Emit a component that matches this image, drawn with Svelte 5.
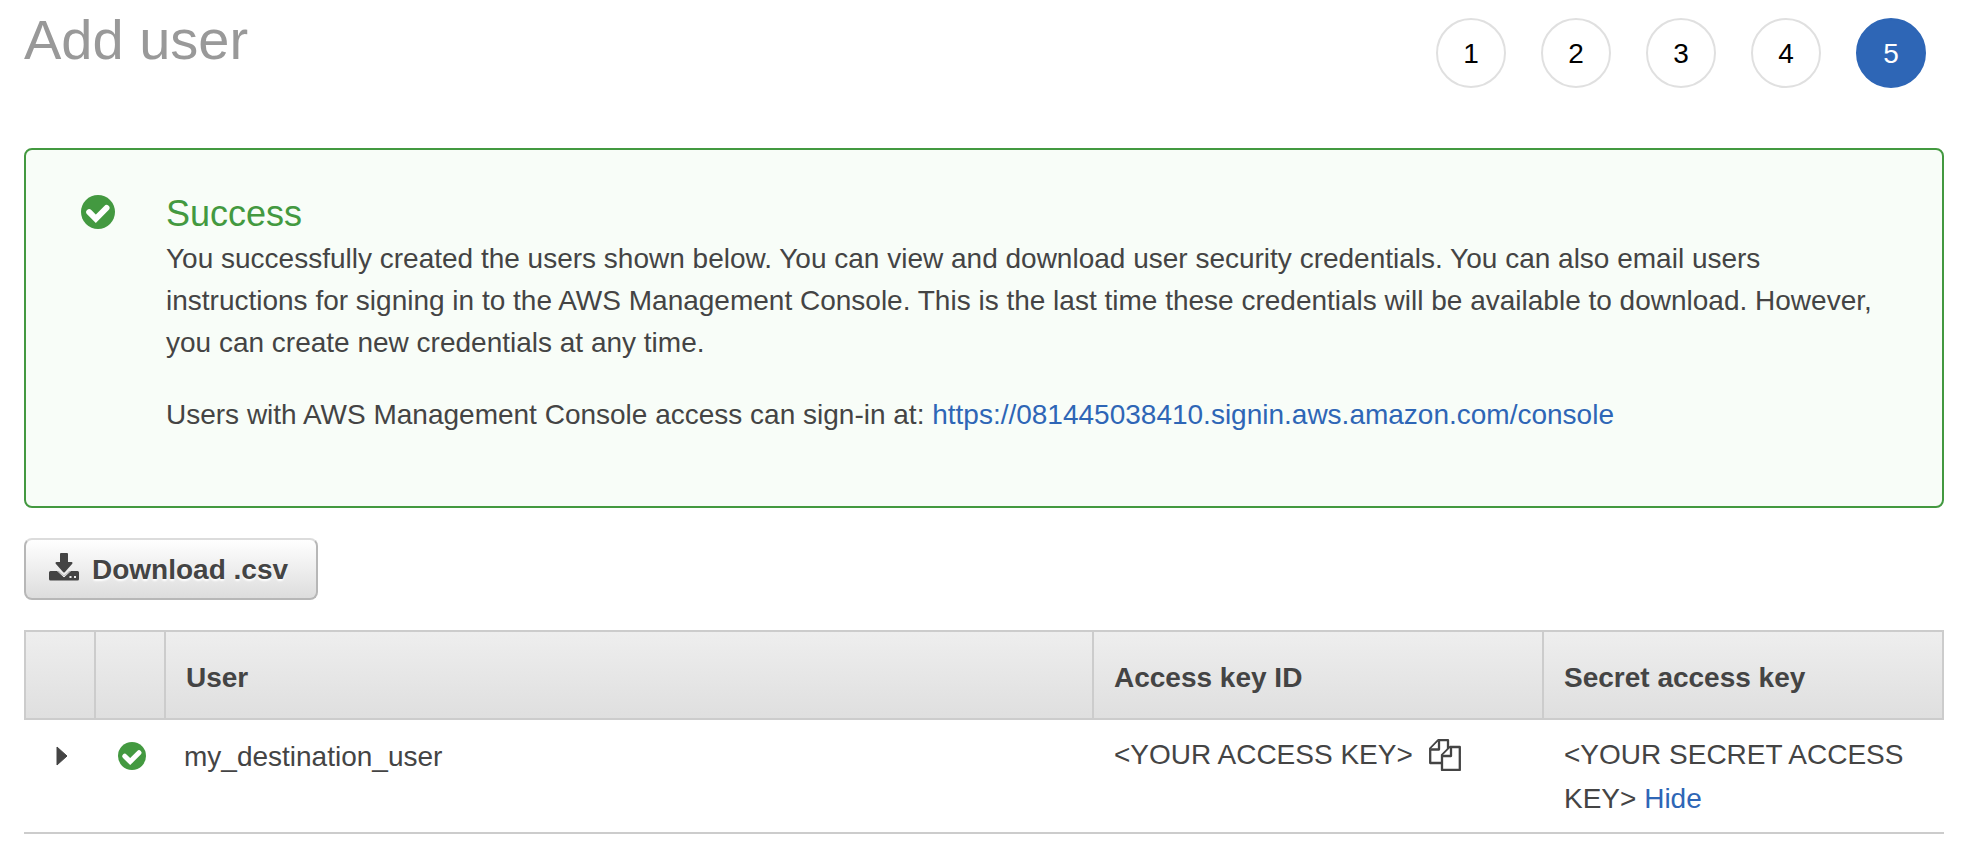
<script lang="ts">
  type NewUser = {
    name: string;
    accessKey: string;
    secretKey: string;
  };

  const steps = [1, 2, 3, 4, 5];
  const currentStep = 5;
  const signinUrl = 'https://081445038410.signin.aws.amazon.com/console';

  const users: NewUser[] = [
    {
      name: 'my_destination_user',
      accessKey: '<YOUR ACCESS KEY>',
      secretKey: '<YOUR SECRET ACCESS KEY>'
    }
  ];

  let secretVisible = $state(true);

  function copyKey(key: string) {
    navigator.clipboard?.writeText(key);
  }
</script>

{#snippet checkIcon()}
  <svg class="check" viewBox="0 0 34 34" aria-hidden="true">
    <circle cx="17" cy="17" r="17" fill="#439940" />
    <path d="M8.200 17.200l6.600 6.600l10.700-10.800" fill="none" stroke="#fff" stroke-width="6" stroke-linecap="round" />
  </svg>
{/snippet}

<main class="page">
  <header class="page-header">
    <h1>Add user</h1>
    <ol class="steps">
      {#each steps as step}
        <li class="step" class:active={step === currentStep}>{step}</li>
      {/each}
    </ol>
  </header>

  <section class="alert">
    <div class="alert-icon">{@render checkIcon()}</div>
    <div class="alert-body">
      <h2>Success</h2>
      <p>
        You successfully created the users shown below. You can view and download user security credentials. You can
        also email users instructions for signing in to the AWS Management Console. This is the last time these
        credentials will be available to download. However, you can create new credentials at any time.
      </p>
      <p>
        Users with AWS Management Console access can sign-in at:
        <a href={signinUrl}>{signinUrl}</a>
      </p>
    </div>
  </section>

  <button type="button" class="download">
    <svg viewBox="0 0 30 28" aria-hidden="true">
      <path
        d="M1.500 18h8l5.500 5.300l5.500-5.300h8q1.500 0 1.500 1.500v6.500q0 1.500-1.500 1.500h-27q-1.500 0-1.500-1.500v-6.500q0-1.500 1.500-1.500z"
        fill="#444"
      />
      <path d="M12 1h6v9h4.500l-7.500 8.500l-7.500-8.500h4.500z" fill="#444" stroke="#444" stroke-width="2" stroke-linejoin="round" />
      <path d="M8 17.500l7 6.500l7-6.500" fill="none" stroke="#eee" stroke-width="1" />
      <path d="M20.500 23h2v2h-2zM25 23h2v2h-2z" fill="#eee" />
    </svg>
    Download .csv
  </button>

  <table>
    <colgroup>
      <col class="col-icon" />
      <col class="col-icon" />
      <col />
      <col class="col-key" />
      <col class="col-secret" />
    </colgroup>
    <thead>
      <tr>
        <th aria-label="Details"></th>
        <th aria-label="Status"></th>
        <th>User</th>
        <th>Access key ID</th>
        <th>Secret access key</th>
      </tr>
    </thead>
    <tbody>
      {#each users as user}
        <tr>
          <td class="icon-cell">
            <button type="button" class="plain" aria-label="Expand">
              <svg class="caret" viewBox="0 0 12 20" aria-hidden="true">
                <path d="M1 1l10 9l-10 9z" fill="#444" stroke="#444" stroke-linejoin="round" />
              </svg>
            </button>
          </td>
          <td class="icon-cell">{@render checkIcon()}</td>
          <td class="name">{user.name}</td>
          <td>
            <div class="key">
              {user.accessKey}
              <button type="button" class="plain" aria-label="Copy" onclick={() => copyKey(user.accessKey)}>
                <svg class="copy" viewBox="0 0 32 32" aria-hidden="true">
                  <g fill="#fff" stroke="#444" stroke-width="2.300" stroke-linejoin="round">
                    <path d="M1.200 24v-14.500l8-8.300h9.800v22.800z" />
                    <path d="M1.200 10.500h8.800v-9" />
                    <path d="M13 31v-15l8-8h9.800v23z" />
                    <path d="M13 17h9v-9" />
                  </g>
                </svg>
              </button>
            </div>
          </td>
          <td>
            {#if secretVisible}{user.secretKey}{:else}*********{/if}
            <button type="button" class="plain link" onclick={() => (secretVisible = !secretVisible)}>
              {secretVisible ? 'Hide' : 'Show'}
            </button>
          </td>
        </tr>
      {/each}
    </tbody>
  </table>
</main>

<style>
  :global(body) {
    margin: 0;
    background: #fff;
  }

  .page {
    padding: 0 30px 24px 24px;
    font-family: 'Helvetica Neue', 'Liberation Sans', Arial, sans-serif;
    font-size: 28px;
    line-height: 42px;
    color: #444;
  }

  .page-header {
    display: flex;
    justify-content: space-between;
    align-items: flex-start;
    padding-right: 18px;
    margin-bottom: 60px;
  }

  h1 {
    margin: 8px 0 0;
    font-size: 56px;
    line-height: 64px;
    font-weight: normal;
    color: #999;
  }

  .steps {
    display: flex;
    gap: 35px;
    margin: 18px 0 0;
    padding: 0;
    list-style: none;
  }

  .step {
    box-sizing: border-box;
    width: 70px;
    height: 70px;
    border: 2px solid #e0e0e0;
    border-radius: 50%;
    line-height: 68px;
    text-align: center;
    color: #000;
  }

  .step.active {
    border-color: #2e66b6;
    background: #2e66b6;
    color: #fff;
  }

  /* Success message */
  .alert {
    display: flex;
    gap: 51px;
    padding: 40px 40px 40px 55px;
    border: 2px solid #439940;
    border-radius: 8px;
    background: #f8fdf8;
  }

  .alert-icon {
    flex: none;
    padding-top: 5px;
  }

  .check {
    display: block;
    width: 34px;
    height: 34px;
  }

  h2 {
    margin: 0;
    font-size: 36px;
    line-height: 48px;
    font-weight: normal;
    color: #439940;
  }

  p {
    margin: 0 0 30px;
  }

  a,
  .plain.link {
    color: #2e66b6;
    text-decoration: none;
  }

  button {
    font: inherit;
    color: inherit;
    cursor: pointer;
  }

  .download {
    display: flex;
    align-items: center;
    gap: 13px;
    margin: 30px 0;
    padding: 9px 28px 7px 23px;
    border: 2px solid #b7b7b7;
    border-top-color: #dcdcdc;
    border-radius: 8px;
    background: linear-gradient(#fff, #ddd);
    font-weight: bold;
    text-shadow: 0 2px 2px #fff;
  }

  .download svg {
    width: 30px;
    height: 28px;
    margin-bottom: 6px;
  }

  .plain {
    padding: 0;
    border: 0;
    background: none;
  }

  /* Users table */
  table {
    width: 100%;
    table-layout: fixed;
    border-collapse: separate;
    border-spacing: 0;
    line-height: 44px;
  }

  .col-icon {
    width: 70px;
  }

  .col-key {
    width: 450px;
  }

  .col-secret {
    width: 402px;
  }

  th {
    padding: 25px 20px 19px;
    border: 2px solid #ccc;
    border-right: 0;
    background: linear-gradient(#eee, #dfdfdf);
    height: 42px;
    line-height: 42px;
    text-align: left;
  }

  th:last-child {
    border-right: 2px solid #ccc;
  }

  td {
    padding: 13px 20px 11px 22px;
    border-bottom: 2px solid #ccc;
    vertical-align: top;
  }

  td.name {
    padding-top: 15px;
    padding-left: 20px;
  }

  td.icon-cell {
    padding: 22px 0 0 5px;
  }

  .icon-cell .check {
    width: 28px;
    height: 28px;
    margin: 0 auto;
  }

  .icon-cell .plain {
    display: block;
    margin: 4px auto 0;
  }

  .caret {
    display: block;
    width: 12px;
    height: 20px;
  }

  .key {
    display: flex;
    gap: 16px;
  }

  .copy {
    display: block;
    width: 32px;
    height: 32px;
  }
</style>
